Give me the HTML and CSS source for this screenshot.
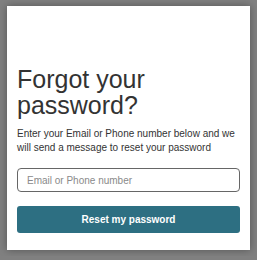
FILE: index.html
```html
<!DOCTYPE html>
<html lang="en">
<head>
  <meta charset="UTF-8" />
  <meta name="viewport" content="width=device-width, initial-scale=1.0" />
  <title>Forgot your password?</title>
  <link rel="stylesheet" href="styles.css">
</head>
<body>
  <div class="card">
    <h1>Forgot your password?</h1>
    <p class="hint">Enter your Email or Phone number below and we will send a message to reset your password</p>
    <form class="reset-form">
      <input type="text" name="username" placeholder="Email or Phone number">
      <button type="submit">Reset my password</button>
    </form>
  </div>
</body>
</html>
```

FILE: styles.css
```css
body {
  margin: 0;
  padding: 6px 7px;
  background: #808080;
  font-family: "Liberation Sans", Arial, sans-serif;
  color: #333;
}
.card {
  box-sizing: border-box;
  width: 243px;
  height: 244px;
  background: #fff;
  padding: 60px 10px 17px;
  box-shadow: 0 0 8px rgba(0,0,0,0.35);
}
h1 {
  margin: 0;
  font-size: 25px;
  line-height: 26px;
  font-weight: normal;
  color: #333;
}
.hint {
  margin: 9px 0 0;
  font-size: 10px;
  line-height: 14px;
}
.reset-form {
  display: flex;
  flex-direction: column;
  gap: 14px;
  margin-top: 13px;
}
input {
  box-sizing: border-box;
  height: 24px;
  width: 100%;
  padding: 0 9px;
  border: 1px solid #666;
  border-radius: 4px;
  font-family: inherit;
  font-size: 10px;
  color: #333;
}
input::placeholder {
  color: #8a8a8a;
}
button {
  height: 27px;
  width: 100%;
  background: #2d6f82;
  color: #fff;
  border: none;
  border-radius: 3px;
  font-family: inherit;
  font-size: 10px;
  font-weight: bold;
  cursor: pointer;
}
```
